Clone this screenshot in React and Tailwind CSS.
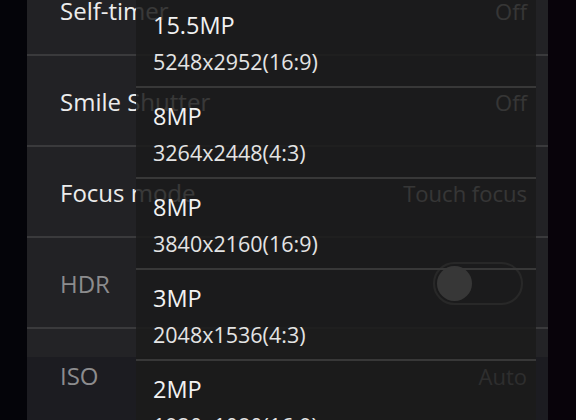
const SETTINGS = [
  { label: 'Self-timer', value: 'Off' },
  { label: 'Smile Shutter', value: 'Off' },
  { label: 'Focus mode', value: 'Touch focus' },
  { label: 'HDR', toggle: true, disabled: true },
  { label: 'ISO', value: 'Auto', disabled: true },
]

const SIZES = [
  { mp: '15.5MP', res: '5248x2952(16:9)' },
  { mp: '8MP', res: '3264x2448(4:3)' },
  { mp: '8MP', res: '3840x2160(16:9)' },
  { mp: '3MP', res: '2048x1536(4:3)' },
  { mp: '2MP', res: '1920x1080(16:9)' },
]

function SettingRow({ item, last }) {
  return (
    <div
      className={
        'flex h-[91px] shrink-0 flex-col ' +
        (last ? 'bg-[linear-gradient(to_bottom,#232326_28px,#1c1c21_28px)]' : '')
      }
    >
      <div className="flex flex-1 items-center justify-between pl-[33px] pr-[21px] pt-[2px]">
        <span
          className={
            'text-[24px] leading-[30px] ' + (item.disabled ? 'text-[#8c8c8e]' : 'text-[#ececec]')
          }
        >
          {item.label}
        </span>
        {item.toggle ? (
          <div className="mr-[4px] flex h-[43px] w-[90px] items-center rounded-full border-2 border-[#7a7a7a] px-[2px]">
            <div className="h-[35px] w-[35px] rounded-full bg-[#e0e0e0]" />
          </div>
        ) : (
          <span
            className={
              'text-[22px] leading-[30px] ' + (item.disabled ? 'text-[#a0a0a0]' : 'text-[#dadada]')
            }
          >
            {item.value}
          </span>
        )}
      </div>
      {!last && <div className="h-[2px] bg-[#3a3a3c]" />}
    </div>
  )
}

export default function App() {
  return (
    <div
      className="relative flex h-[420px] w-[576px] overflow-hidden bg-[#050307]"
      style={{ fontFamily: '"Open Sans", "Noto Sans", sans-serif' }}
    >
      <div className="w-[27px] shrink-0 bg-[#040409]" />

      <div className="flex w-[521px] shrink-0 flex-col bg-[#222225]">
        <div className="-mt-[35px] flex flex-col">
          {SETTINGS.map((item, i) => (
            <SettingRow key={item.label} item={item} last={i === SETTINGS.length - 1} />
          ))}
        </div>
      </div>

      <div className="flex-1 bg-[#08030a]" />

      {/* picture size dropdown */}
      <div className="absolute bottom-0 left-[136px] top-0 w-[400px] bg-[#1b1b1b]/[0.86]">
        <div className="-mt-[3px] flex flex-col">
          {SIZES.map((s, i) => (
            <div key={i} className="flex h-[91px] shrink-0 flex-col">
              <div className="flex flex-1 flex-col pl-[17px] pt-[14px]">
                <span className="text-[23.5px] leading-[28px] text-[#f2f2f2]">{s.mp}</span>
                <span className="mt-[9px] text-[21.5px] leading-[28px] text-[#e4e4e4]">
                  {s.res}
                </span>
              </div>
              <div className="h-[2px] bg-[#383838]" />
            </div>
          ))}
        </div>
      </div>
    </div>
  )
}
